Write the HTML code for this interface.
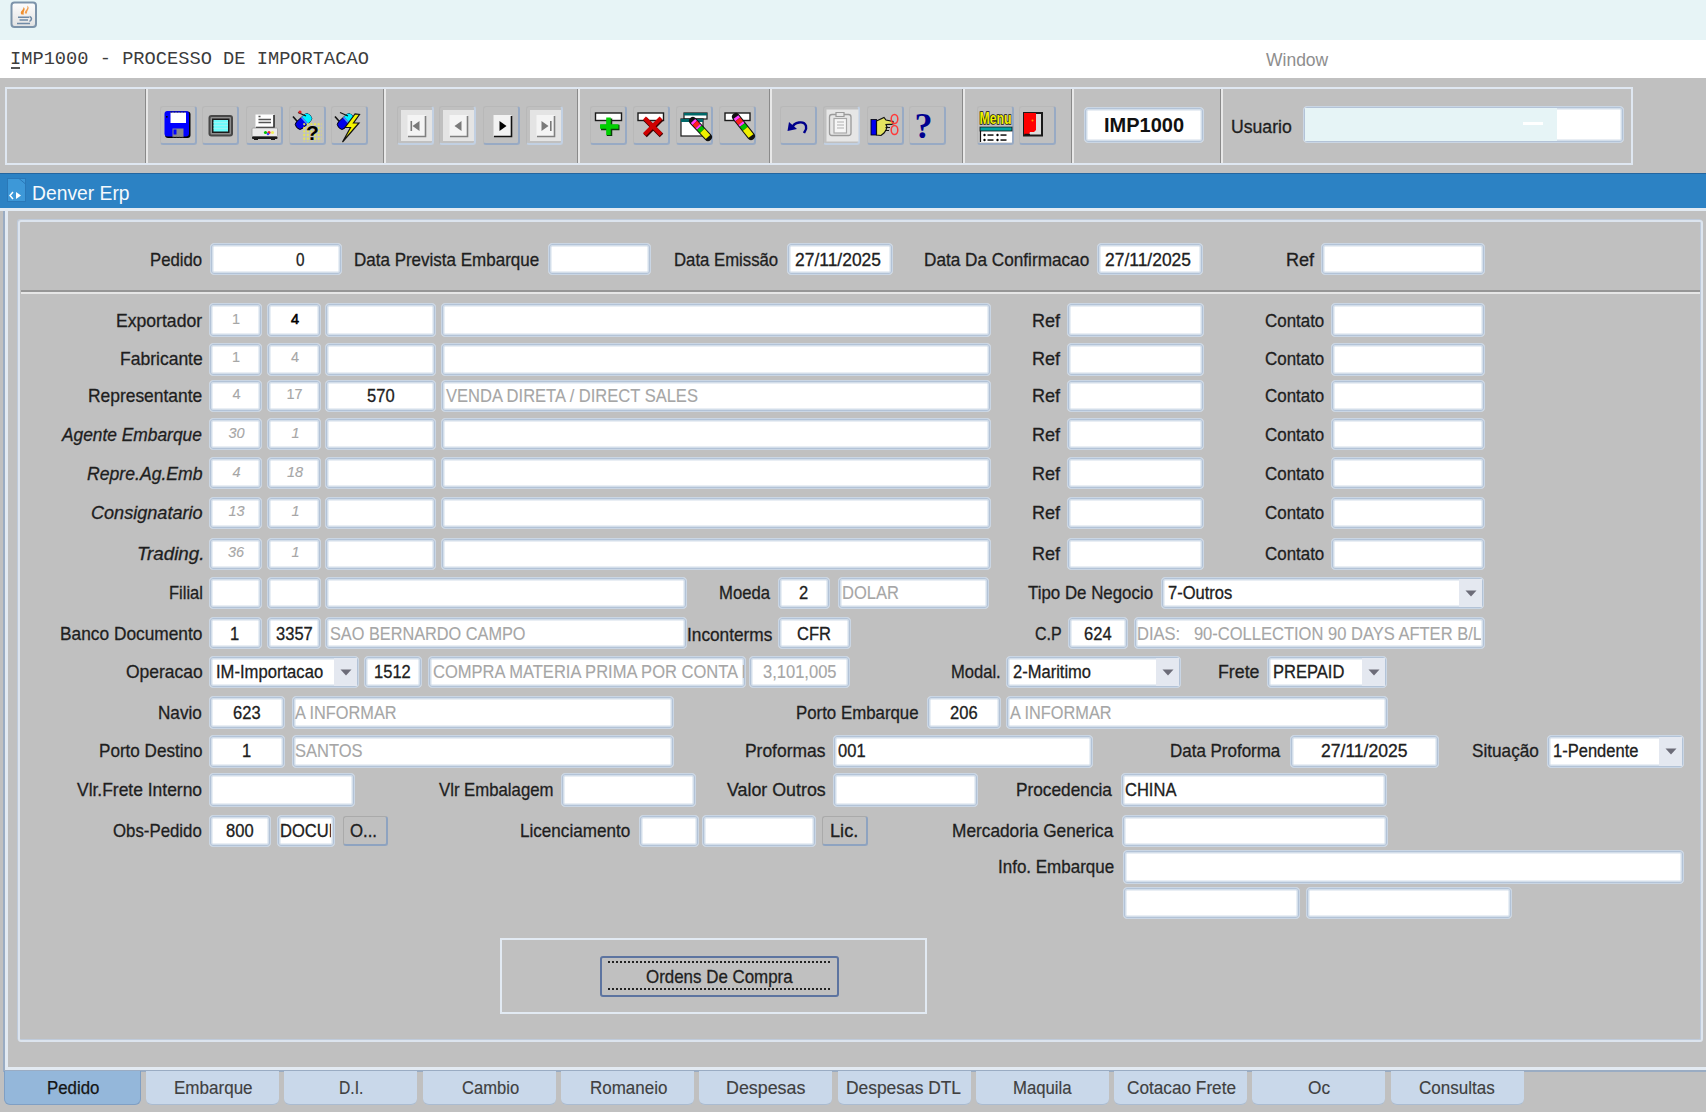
<!DOCTYPE html><html><head><meta charset="utf-8"><title>IMP1000</title><style>
*{margin:0;padding:0;box-sizing:border-box}
html,body{width:1706px;height:1112px;overflow:hidden;background:#c0c0c0;font-family:"Liberation Sans",sans-serif;font-size:17px;color:#1a1a1a}
div,span{position:absolute;white-space:nowrap}
svg{position:absolute}
.f{background:#fff;border:1px solid #cad6e4;box-shadow:inset 0 0 0 1px #b3c3d7,inset 0 0 0 2.5px #d3deea;border-radius:4px}
.arr{background:#e4e8f0}
.t{line-height:20px;transform-origin:0 0}
.tb{border-radius:3px;border-right:2px solid #98aac4;border-bottom:2px solid #98aac4;border-left:1px solid #b8b8b8;border-top:1px solid #b8b8b8}
.btn{border-radius:3px;border-right:2px solid #8ea3c0;border-bottom:2px solid #8ea3c0;border-left:1px solid #aaaaaa;border-top:1px solid #aaaaaa}
.sep{width:3px;border-left:1px solid #8a8a8a;border-right:2px solid #e8e8e8;top:89px;height:74px}
.tab{top:1071px;height:34px;background:#c9d8ea;border-radius:0 0 6px 6px;border-bottom:1px solid #aabbd0}
</style></head><body>
<div style="left:0;top:0;width:1706px;height:40px;background:#e7f4f6"></div>
<svg style="left:10px;top:1px" width="28" height="28"><defs><linearGradient id="jg" x1="0" y1="0" x2="0" y2="1"><stop offset="0" stop-color="#fdfdfd"/><stop offset="1" stop-color="#e2e2e2"/></linearGradient></defs><rect x="1.5" y="1.5" width="24.5" height="24.5" rx="3" fill="url(#jg)" stroke="#7c93aa" stroke-width="2"/><path d="M11.5 13.5 C9 10.5 14 9 13.5 6 C16.5 8.5 12.5 10.5 14 13.5 Z" fill="#ef8f2f"/><path d="M15 12.5 C14 9.5 19 8 17 4.5 C21 7 16.5 9.5 17 12.5 Z" fill="#f2a050"/><path d="M8 16.2 H19 M9.5 19 H18 M7 22.5 H20" stroke="#6f8aa6" stroke-width="1.6"/><path d="M19.5 15.5 Q23.5 17.5 19.5 20.5" stroke="#6f8aa6" stroke-width="1.5" fill="none"/></svg>
<div style="left:0;top:40px;width:1706px;height:38px;background:#fff"></div>
<div style="left:10px;top:45px;font-family:'Liberation Mono',monospace;font-size:18.7px;line-height:28px;color:#3c3c3c">IMP1000 - PROCESSO DE IMPORTACAO</div>
<div style="left:11px;top:67px;width:9px;height:2px;background:#555"></div>
<div style="left:1266px;top:46px;font-size:17.5px;line-height:28px;color:#8e8e8e">Window</div>
<div style="left:5px;top:87px;width:1628px;height:78px;border:2px solid #dfe7f1"></div>
<div class="sep" style="left:145px"></div>
<div class="sep" style="left:383px"></div>
<div class="sep" style="left:577px"></div>
<div class="sep" style="left:769px"></div>
<div class="sep" style="left:962px"></div>
<div class="sep" style="left:1071px"></div>
<div class="sep" style="left:1220px"></div>
<div class="tb" style="left:160px;top:106px;width:37px;height:39px;"></div>
<div class="tb" style="left:202px;top:106px;width:37px;height:39px;"></div>
<div class="tb" style="left:246px;top:106px;width:37px;height:39px;"></div>
<div class="tb" style="left:289px;top:106px;width:37px;height:39px;"></div>
<div class="tb" style="left:331px;top:106px;width:37px;height:39px;"></div>
<div class="tb" style="left:397px;top:106px;width:37px;height:39px;border-right-color:#c2d0e2;border-bottom-color:#c2d0e2;"></div>
<div class="tb" style="left:439px;top:106px;width:37px;height:39px;border-right-color:#c2d0e2;border-bottom-color:#c2d0e2;"></div>
<div class="tb" style="left:483px;top:106px;width:37px;height:39px;"></div>
<div class="tb" style="left:526px;top:106px;width:37px;height:39px;border-right-color:#c2d0e2;border-bottom-color:#c2d0e2;"></div>
<div class="tb" style="left:590px;top:106px;width:37px;height:39px;"></div>
<div class="tb" style="left:633px;top:106px;width:37px;height:39px;"></div>
<div class="tb" style="left:676px;top:106px;width:37px;height:39px;"></div>
<div class="tb" style="left:719px;top:106px;width:37px;height:39px;"></div>
<div class="tb" style="left:780px;top:106px;width:37px;height:39px;"></div>
<div class="tb" style="left:823px;top:106px;width:37px;height:39px;border-right-color:#c2d0e2;border-bottom-color:#c2d0e2;"></div>
<div class="tb" style="left:867px;top:106px;width:37px;height:39px;"></div>
<div class="tb" style="left:909px;top:106px;width:37px;height:39px;"></div>
<div class="tb" style="left:977px;top:106px;width:37px;height:39px;"></div>
<div class="tb" style="left:1019px;top:106px;width:37px;height:39px;"></div>
<svg width="1706" height="180" style="position:absolute;left:0;top:0"><defs><pattern id="ydots" width="3.6" height="3.6" patternUnits="userSpaceOnUse"><circle cx="1.8" cy="1.8" r="1.1" fill="#e8e850"/></pattern></defs><rect x="165" y="111.5" width="25.5" height="26.5" rx="3" fill="#000"/><rect x="164.5" y="111" width="24.5" height="25.5" rx="3" fill="#0000ff"/><rect x="170.5" y="112.5" width="15.5" height="10.5" fill="#fff"/><line x1="170.5" y1="112" x2="186" y2="112" stroke="#222" stroke-width="1" stroke-dasharray="2,1"/><rect x="172.5" y="128.5" width="11" height="8.5" fill="#8a8a8a"/><rect x="173.5" y="129.5" width="3" height="5" fill="#0000ff"/><line x1="172.5" y1="137.3" x2="183.5" y2="137.3" stroke="#222" stroke-width="1" stroke-dasharray="2,1"/><rect x="166" y="116" width="1.6" height="1.6" fill="#000"/><rect x="208.5" y="115" width="24.5" height="21.5" rx="3" fill="#474747"/><rect x="210.5" y="117" width="20.5" height="17.5" rx="1" fill="#8c8c8c"/><rect x="212" y="118.5" width="17.5" height="14.5" fill="#1a1a1a"/><rect x="213.5" y="120" width="14.5" height="11.5" fill="#6ffcfc"/><line x1="213.5" y1="122.5" x2="228" y2="122.5" stroke="#b8f0f0" stroke-width="0.6"/><line x1="213.5" y1="125.5" x2="228" y2="125.5" stroke="#b8f0f0" stroke-width="0.6"/><line x1="213.5" y1="128.5" x2="228" y2="128.5" stroke="#b8f0f0" stroke-width="0.6"/><rect x="255.5" y="114.5" width="18.5" height="12.5" fill="#fff"/><path d="M274 115 V127.5 H256" stroke="#222" stroke-width="1.5" fill="none"/><path d="M258.5 116.5 h2 M258.5 119.5 h12.5 M258.5 122.5 h12.5" stroke="#555" stroke-width="1.3"/><rect x="252" y="128" width="25.5" height="8.5" rx="1" fill="#ececec" stroke="#9a9a9a" stroke-width="0.8"/><circle cx="265.5" cy="132.5" r="1.6" fill="#00c000"/><circle cx="269" cy="132.5" r="1.6" fill="#ff2020"/><circle cx="268" cy="134" r="1.3" fill="#4040ff"/><circle cx="272.5" cy="132.5" r="1.6" fill="#f0f060"/><rect x="252" y="136.5" width="25.5" height="2.5" rx="1" fill="#1a1a1a"/><rect x="254" y="138.5" width="4" height="1.5" fill="#1a1a1a"/><rect x="271" y="138.5" width="4" height="1.5" fill="#1a1a1a"/><path d="M293 116.5 L299.5 124" stroke="#111" stroke-width="1.6"/><g transform="translate(303.5 121.5) rotate(-42)"><rect x="-9" y="-4.5" width="18" height="9" rx="4" fill="#0000e8" stroke="#000" stroke-width="0.9"/><path d="M2 -4.5 H5 A4 4 0 0 1 9 -0.5 V0.5 A4 4 0 0 1 5 4.5 H2 Z" fill="#00f0ff"/><rect x="0.5" y="-4.5" width="1.6" height="9" fill="#5090ff"/></g><path d="M298 112.5 L306 116" stroke="#111" stroke-width="1.2"/><circle cx="300" cy="112" r="1.6" fill="#e02020"/><rect x="303" y="123" width="18.5" height="18.5" fill="url(#ydots)"/><text x="306" y="140" font-family="Liberation Sans" font-weight="bold" font-size="21" fill="#000">?</text><path d="M335 116.5 L341.5 124" stroke="#111" stroke-width="1.6"/><g transform="translate(345.5 121.5) rotate(-42)"><rect x="-9" y="-4.5" width="18" height="9" rx="4" fill="#0000e8" stroke="#000" stroke-width="0.9"/><path d="M2 -4.5 H5 A4 4 0 0 1 9 -0.5 V0.5 A4 4 0 0 1 5 4.5 H2 Z" fill="#00f0ff"/><rect x="0.5" y="-4.5" width="1.6" height="9" fill="#5090ff"/></g><path d="M340 112.5 L348 116" stroke="#111" stroke-width="1.2"/><path d="M355 114 L345 127.5 L350.5 127.5 L342.5 142 L359 123 L353.5 123 L359.5 114.5 Z" fill="#f4f400" stroke="#111" stroke-width="1.2"/><rect x="401" y="110" width="31" height="31" fill="#e4e4e4"/><rect x="407.5" y="115" width="18" height="21" fill="#f4f4f4"/><path d="M425.5 116 V136.5 H408" stroke="#808080" stroke-width="1.6" fill="none"/><rect x="410.5" y="121" width="1.6" height="10" fill="#7a7a7a"/><path d="M412.5 126 L419.5 121 V131 Z" fill="#7a7a7a"/><rect x="443" y="110" width="31" height="31" fill="#e4e4e4"/><rect x="449.5" y="115" width="18" height="21" fill="#f4f4f4"/><path d="M467.5 116 V136.5 H450" stroke="#808080" stroke-width="1.6" fill="none"/><path d="M454.5 126 L461.5 121 V131 Z" fill="#7a7a7a"/><rect x="493.5" y="115" width="18" height="21" fill="#f2f2f2"/><path d="M511.5 116 V136.5 H494" stroke="#111" stroke-width="1.6" fill="none"/><path d="M506.5 126 L499.5 121 V131 Z" fill="#000"/><rect x="530" y="110" width="31" height="31" fill="#e4e4e4"/><rect x="536.5" y="115" width="18" height="21" fill="#f4f4f4"/><path d="M554.5 116 V136.5 H537" stroke="#808080" stroke-width="1.6" fill="none"/><path d="M548.5 126 L541.5 121 V131 Z" fill="#7a7a7a"/><rect x="550.0" y="121" width="1.6" height="10" fill="#7a7a7a"/><rect x="595.5" y="113" width="26" height="7.5" fill="#fff" stroke="#1a1a1a" stroke-width="1.4"/><path d="M609.5 118.5 V136 M601 127.5 H619.5" stroke="#0a3a0a" stroke-width="5.5"/><path d="M608.5 117.5 V135 M600 126.5 H618.5" stroke="#00d000" stroke-width="4.5"/><rect x="638" y="113" width="25.5" height="7.5" fill="#fff" stroke="#1a1a1a" stroke-width="1.4"/><path d="M645 119 L661.5 135.5 M661.5 119 L645 135.5" stroke="#3a0000" stroke-width="5"/><path d="M644.5 118 L661 134.5 M661 118 L644.5 134.5" stroke="#d00000" stroke-width="4"/><rect x="684" y="113" width="23" height="6" fill="#fff" stroke="#1a1a1a" stroke-width="1.2"/><rect x="684" y="113" width="23" height="2.5" fill="#006868"/><rect x="681" y="119" width="22" height="17" fill="#fff" stroke="#1a1a1a" stroke-width="1.2"/><rect x="681" y="119" width="22" height="3" fill="#006868"/><path d="M693 121 L708 137" stroke="#111" stroke-width="8" stroke-linecap="round"/><path d="M693.0 121.0 L694.8 122.9" stroke="#ff40ff" stroke-width="6"/><path d="M694.8 122.9 L697.8 126.1" stroke="#ff2020" stroke-width="6"/><path d="M697.8 126.1 L699.3 127.7" stroke="#ff40ff" stroke-width="6"/><path d="M699.3 127.7 L702.3 130.9" stroke="#00c000" stroke-width="6"/><path d="M702.3 130.9 L708.0 137.0" stroke="#f0f000" stroke-width="6"/><rect x="725" y="113" width="25" height="7.5" fill="#fff" stroke="#1a1a1a" stroke-width="1.4"/><path d="M736 117 L751 136" stroke="#111" stroke-width="8" stroke-linecap="round"/><path d="M736.0 117.0 L737.8 119.3" stroke="#ff40ff" stroke-width="6"/><path d="M737.8 119.3 L740.8 123.1" stroke="#ff2020" stroke-width="6"/><path d="M740.8 123.1 L742.3 125.0" stroke="#ff40ff" stroke-width="6"/><path d="M742.3 125.0 L745.3 128.8" stroke="#00c000" stroke-width="6"/><path d="M745.3 128.8 L751.0 136.0" stroke="#f0f000" stroke-width="6"/><path d="M792 128 C794 122 804 120 806 126 C807 129 805 131 804 133" stroke="#00008b" stroke-width="2.4" fill="none"/><path d="M787.5 131 L789 122 L797 129 Z" fill="#00008b"/><rect x="826.5" y="109.5" width="32" height="32" fill="#e6e6e6"/><rect x="829.5" y="114.5" width="21.5" height="21" rx="2.5" fill="none" stroke="#9a9a9a" stroke-width="1.3"/><rect x="834" y="118.5" width="12.5" height="14.5" fill="#f6f6f6" stroke="#a8a8a8" stroke-width="1.2"/><path d="M836 112.5 h8 v4 h-8 z" fill="#e6e6e6" stroke="#9a9a9a" stroke-width="1.2"/><path d="M837 122 h7 M837 125 h7 M837 128 h7" stroke="#b0b0b0" stroke-width="1"/><rect x="871" y="119.5" width="5.5" height="15.5" fill="#0000f0" stroke="#000" stroke-width="0.8"/><path d="M876.5 121 L884 117.5 L886 120 L893 121.5 L893 124 L886 124.5 L887 127 L886 130 L884 133 L881 135.5 L876.5 135 Z" fill="#e4e460" stroke="#111" stroke-width="1.2"/><path d="M886 124.5 H892 M885.5 127.5 H890 M885 130.5 H889" stroke="#111" stroke-width="1"/><ellipse cx="894.5" cy="119" rx="3.3" ry="4.5" fill="none" stroke="#ff3a3a" stroke-width="1.5"/><ellipse cx="894.5" cy="130" rx="3.3" ry="4.5" fill="none" stroke="#ff3a3a" stroke-width="1.5"/><text x="914.5" y="138" font-family="Liberation Serif" font-weight="bold" font-size="36" fill="#000090">?</text><rect x="980" y="126.5" width="32" height="16" fill="#fff"/><rect x="980" y="127" width="32" height="4" fill="#00a0a0" stroke="#111" stroke-width="0.8"/><path d="M980.5 131 V142" stroke="#111" stroke-width="1.2"/><circle cx="984.5" cy="135" r="1.2" fill="#000"/><rect x="987.5" y="134.3" width="6" height="1.5" fill="#111"/><circle cx="997.5" cy="135" r="1.2" fill="#000"/><rect x="1000.5" y="134.3" width="6" height="1.5" fill="#111"/><circle cx="984.5" cy="140" r="1.2" fill="#000"/><rect x="987.5" y="139.3" width="6" height="1.5" fill="#111"/><circle cx="997.5" cy="140" r="1.2" fill="#000"/><rect x="1000.5" y="139.3" width="6" height="1.5" fill="#111"/><text x="979.5" y="124" font-family="Liberation Sans" font-weight="bold" font-size="17" fill="#f0f000" stroke="#111" stroke-width="1.6" paint-order="stroke" textLength="32" lengthAdjust="spacingAndGlyphs">Menu</text><rect x="1024" y="113" width="18" height="22.5" fill="#dcdcdc" stroke="#1a1a1a" stroke-width="2"/><path d="M1024 113 H1036 V130 L1034 132 L1030 132 L1029 134.5 L1024 134.5 Z" fill="#ff0000"/><path d="M1024.5 134.5 H1030" stroke="#111" stroke-width="1.5"/><circle cx="1032.5" cy="120.5" r="1" fill="#ff9900"/></svg>
<div class="f" style="left:1084px;top:107px;width:120px;height:36px;line-height:34px;text-align:center;font-weight:bold;font-size:20px;color:#111">IMP1000</div>
<span class="t" style="left:1230.99px;top:116.80px;font-size:17.5px;color:#1e1e1e;-webkit-text-stroke:0.3px #1e1e1e;transform:scaleX(1.0074);">Usuario</span>
<div class="f" style="left:1303px;top:106px;width:321px;height:37px"><div style="left:1px;top:1px;width:252px;height:33px;background:#e6f4f6"></div><div style="left:219px;top:15px;width:20px;height:3px;background:#fff"></div></div>
<div style="left:0;top:173px;width:1706px;height:35px;background:#2c82c4;border-top:1px solid #2466a0"></div>
<svg style="left:7px;top:178px" width="20" height="25"><rect x="0.5" y="0.5" width="18" height="23" fill="#3d98d8" stroke="#2a78b8"/><path d="M12 0.5 L18.5 6" stroke="#2a78b8"/><path d="M9 14 L14 17.5 L9 21 Z" fill="#fff"/><path d="M6 14 L3 17.5 L6 21" stroke="#fff" stroke-width="1.5" fill="none"/></svg>
<span class="t" style="left:32.04px;top:182.80px;font-size:20px;color:#f4f9fc;transform:scaleX(0.9647);">Denver Erp</span>
<div style="left:0;top:208px;width:1706px;height:3px;background:#e3ebf3"></div>
<div style="left:3px;top:211px;width:2px;height:860px;background:#9aacc3"></div>
<div style="left:5px;top:209px;width:3px;height:860px;background:#e3eaf2"></div>
<div style="left:5px;top:1067px;width:1701px;height:3px;background:#e3eaf2"></div>
<div style="left:3px;top:1070px;width:1703px;height:2px;background:#9aacc3"></div>
<div style="left:18px;top:220px;width:1685px;height:822px;border:2px solid #dce4ee;border-radius:3px;box-shadow:-1px -1px 0 #bfcbdb, inset -1px -1px 0 #bfcbdb"></div>
<div style="left:21px;top:290px;width:1679px;height:2px;background:#969696"></div>
<div style="left:21px;top:292px;width:1679px;height:2px;background:#e6e6e6"></div>
<span class="t" style="left:150.09px;top:249.80px;font-size:18.5px;color:#1e1e1e;-webkit-text-stroke:0.3px #1e1e1e;transform:scaleX(0.9056);">Pedido</span>
<div class="f" style="left:210px;top:243px;width:132px;height:32px"></div>
<span class="t" style="left:296.00px;top:249.80px;font-size:18px;color:#202020;-webkit-text-stroke:0.3px #202020;transform:scaleX(0.8500);">0</span>
<span class="t" style="left:354.08px;top:249.80px;font-size:18.5px;color:#1e1e1e;-webkit-text-stroke:0.3px #1e1e1e;transform:scaleX(0.9188);">Data Prevista Embarque</span>
<div class="f" style="left:548px;top:243px;width:103px;height:32px"></div>
<span class="t" style="left:674.10px;top:249.80px;font-size:18.5px;color:#1e1e1e;-webkit-text-stroke:0.3px #1e1e1e;transform:scaleX(0.9046);">Data Emissão</span>
<div class="f" style="left:787px;top:243px;width:106px;height:32px"></div>
<span class="t" style="left:795.40px;top:249.80px;font-size:18px;color:#202020;-webkit-text-stroke:0.3px #202020;transform:scaleX(0.9691);">27/11/2025</span>
<span class="t" style="left:924.07px;top:249.80px;font-size:18.5px;color:#1e1e1e;-webkit-text-stroke:0.3px #1e1e1e;transform:scaleX(0.9287);">Data Da Confirmacao</span>
<div class="f" style="left:1097px;top:243px;width:106px;height:32px"></div>
<span class="t" style="left:1105.40px;top:249.80px;font-size:18px;color:#202020;-webkit-text-stroke:0.3px #202020;transform:scaleX(0.9691);">27/11/2025</span>
<span class="t" style="left:1286.02px;top:249.80px;font-size:18.5px;color:#1e1e1e;-webkit-text-stroke:0.3px #1e1e1e;transform:scaleX(0.9773);">Ref</span>
<div class="f" style="left:1321px;top:243px;width:164px;height:32px"></div>
<span class="t" style="left:116.05px;top:310.80px;font-size:18.5px;color:#1e1e1e;-webkit-text-stroke:0.3px #1e1e1e;transform:scaleX(0.9515);">Exportador</span>
<div class="f" style="left:209px;top:303px;width:53px;height:34px"></div>
<div class="f" style="left:267px;top:303px;width:54px;height:34px"></div>
<div class="f" style="left:325px;top:303px;width:111px;height:34px"></div>
<div class="f" style="left:441px;top:303px;width:550px;height:34px"></div>
<span class="t" style="left:232.00px;top:309.30px;font-size:14.5px;color:#a6a6a6;-webkit-text-stroke:0.1px #a6a6a6;">1</span>
<span class="t" style="left:291.00px;top:309.30px;font-size:14.5px;color:#000;-webkit-text-stroke:0.6px #000;">4</span>
<span class="t" style="left:1032.02px;top:310.80px;font-size:18.5px;color:#1e1e1e;-webkit-text-stroke:0.3px #1e1e1e;transform:scaleX(0.9773);">Ref</span>
<div class="f" style="left:1067px;top:303px;width:137px;height:34px"></div>
<span class="t" style="left:1265.00px;top:310.80px;font-size:18.5px;color:#1e1e1e;-webkit-text-stroke:0.3px #1e1e1e;transform:scaleX(0.9146);">Contato</span>
<div class="f" style="left:1331px;top:303px;width:154px;height:34px"></div>
<span class="t" style="left:119.55px;top:348.80px;font-size:18.5px;color:#1e1e1e;-webkit-text-stroke:0.3px #1e1e1e;transform:scaleX(0.9464);">Fabricante</span>
<div class="f" style="left:209px;top:343px;width:53px;height:33px"></div>
<div class="f" style="left:267px;top:343px;width:54px;height:33px"></div>
<div class="f" style="left:325px;top:343px;width:111px;height:33px"></div>
<div class="f" style="left:441px;top:343px;width:550px;height:33px"></div>
<span class="t" style="left:232.00px;top:347.30px;font-size:14.5px;color:#a6a6a6;-webkit-text-stroke:0.1px #a6a6a6;">1</span>
<span class="t" style="left:291.00px;top:347.30px;font-size:14.5px;color:#a6a6a6;-webkit-text-stroke:0.1px #a6a6a6;">4</span>
<span class="t" style="left:1032.02px;top:348.80px;font-size:18.5px;color:#1e1e1e;-webkit-text-stroke:0.3px #1e1e1e;transform:scaleX(0.9773);">Ref</span>
<div class="f" style="left:1067px;top:343px;width:137px;height:33px"></div>
<span class="t" style="left:1265.00px;top:348.80px;font-size:18.5px;color:#1e1e1e;-webkit-text-stroke:0.3px #1e1e1e;transform:scaleX(0.9146);">Contato</span>
<div class="f" style="left:1331px;top:343px;width:154px;height:33px"></div>
<span class="t" style="left:88.06px;top:385.80px;font-size:18.5px;color:#1e1e1e;-webkit-text-stroke:0.3px #1e1e1e;transform:scaleX(0.9411);">Representante</span>
<div class="f" style="left:209px;top:380px;width:53px;height:32px"></div>
<div class="f" style="left:267px;top:380px;width:54px;height:32px"></div>
<div class="f" style="left:325px;top:380px;width:111px;height:32px"></div>
<div class="f" style="left:441px;top:380px;width:550px;height:32px"></div>
<span class="t" style="left:232.50px;top:384.30px;font-size:14.5px;color:#a6a6a6;-webkit-text-stroke:0.1px #a6a6a6;">4</span>
<span class="t" style="left:286.47px;top:384.30px;font-size:14.5px;color:#a6a6a6;-webkit-text-stroke:0.1px #a6a6a6;">17</span>
<span class="t" style="left:366.72px;top:385.80px;font-size:18px;color:#202020;-webkit-text-stroke:0.3px #202020;transform:scaleX(0.9180);">570</span>
<span class="t" style="left:446.00px;top:385.80px;font-size:18px;color:#a6a6a6;-webkit-text-stroke:0.12px #a6a6a6;transform:scaleX(0.9180);">VENDA DIRETA / DIRECT SALES</span>
<span class="t" style="left:1032.02px;top:385.80px;font-size:18.5px;color:#1e1e1e;-webkit-text-stroke:0.3px #1e1e1e;transform:scaleX(0.9773);">Ref</span>
<div class="f" style="left:1067px;top:380px;width:137px;height:32px"></div>
<span class="t" style="left:1265.00px;top:385.80px;font-size:18.5px;color:#1e1e1e;-webkit-text-stroke:0.3px #1e1e1e;transform:scaleX(0.9146);">Contato</span>
<div class="f" style="left:1331px;top:380px;width:154px;height:32px"></div>
<span class="t" style="left:62.44px;top:424.80px;font-size:18.5px;color:#1e1e1e;font-style:italic;-webkit-text-stroke:0.3px #1e1e1e;transform:scaleX(0.9377);">Agente Embarque</span>
<div class="f" style="left:209px;top:418px;width:53px;height:32px"></div>
<div class="f" style="left:267px;top:418px;width:54px;height:32px"></div>
<div class="f" style="left:325px;top:418px;width:111px;height:32px"></div>
<div class="f" style="left:441px;top:418px;width:550px;height:32px"></div>
<span class="t" style="left:228.47px;top:423.30px;font-size:14.5px;color:#a6a6a6;font-style:italic;-webkit-text-stroke:0.1px #a6a6a6;">30</span>
<span class="t" style="left:291.50px;top:423.30px;font-size:14.5px;color:#a6a6a6;font-style:italic;-webkit-text-stroke:0.1px #a6a6a6;">1</span>
<span class="t" style="left:1032.02px;top:424.80px;font-size:18.5px;color:#1e1e1e;-webkit-text-stroke:0.3px #1e1e1e;transform:scaleX(0.9773);">Ref</span>
<div class="f" style="left:1067px;top:418px;width:137px;height:32px"></div>
<span class="t" style="left:1265.00px;top:424.80px;font-size:18.5px;color:#1e1e1e;-webkit-text-stroke:0.3px #1e1e1e;transform:scaleX(0.9146);">Contato</span>
<div class="f" style="left:1331px;top:418px;width:154px;height:32px"></div>
<span class="t" style="left:86.70px;top:463.50px;font-size:18.5px;color:#1e1e1e;font-style:italic;-webkit-text-stroke:0.3px #1e1e1e;transform:scaleX(0.9525);">Repre.Ag.Emb</span>
<div class="f" style="left:209px;top:457px;width:53px;height:32px"></div>
<div class="f" style="left:267px;top:457px;width:54px;height:32px"></div>
<div class="f" style="left:325px;top:457px;width:111px;height:32px"></div>
<div class="f" style="left:441px;top:457px;width:550px;height:32px"></div>
<span class="t" style="left:232.50px;top:462.00px;font-size:14.5px;color:#a6a6a6;font-style:italic;-webkit-text-stroke:0.1px #a6a6a6;">4</span>
<span class="t" style="left:286.97px;top:462.00px;font-size:14.5px;color:#a6a6a6;font-style:italic;-webkit-text-stroke:0.1px #a6a6a6;">18</span>
<span class="t" style="left:1032.02px;top:463.50px;font-size:18.5px;color:#1e1e1e;-webkit-text-stroke:0.3px #1e1e1e;transform:scaleX(0.9773);">Ref</span>
<div class="f" style="left:1067px;top:457px;width:137px;height:32px"></div>
<span class="t" style="left:1265.00px;top:463.50px;font-size:18.5px;color:#1e1e1e;-webkit-text-stroke:0.3px #1e1e1e;transform:scaleX(0.9146);">Contato</span>
<div class="f" style="left:1331px;top:457px;width:154px;height:32px"></div>
<span class="t" style="left:90.72px;top:502.80px;font-size:18.5px;color:#1e1e1e;font-style:italic;-webkit-text-stroke:0.3px #1e1e1e;transform:scaleX(0.9773);">Consignatario</span>
<div class="f" style="left:209px;top:497px;width:53px;height:32px"></div>
<div class="f" style="left:267px;top:497px;width:54px;height:32px"></div>
<div class="f" style="left:325px;top:497px;width:111px;height:32px"></div>
<div class="f" style="left:441px;top:497px;width:550px;height:32px"></div>
<span class="t" style="left:228.47px;top:501.30px;font-size:14.5px;color:#a6a6a6;font-style:italic;-webkit-text-stroke:0.1px #a6a6a6;">13</span>
<span class="t" style="left:291.50px;top:501.30px;font-size:14.5px;color:#a6a6a6;font-style:italic;-webkit-text-stroke:0.1px #a6a6a6;">1</span>
<span class="t" style="left:1032.02px;top:502.80px;font-size:18.5px;color:#1e1e1e;-webkit-text-stroke:0.3px #1e1e1e;transform:scaleX(0.9773);">Ref</span>
<div class="f" style="left:1067px;top:497px;width:137px;height:32px"></div>
<span class="t" style="left:1265.00px;top:502.80px;font-size:18.5px;color:#1e1e1e;-webkit-text-stroke:0.3px #1e1e1e;transform:scaleX(0.9146);">Contato</span>
<div class="f" style="left:1331px;top:497px;width:154px;height:32px"></div>
<span class="t" style="left:136.79px;top:543.50px;font-size:18.5px;color:#1e1e1e;font-style:italic;-webkit-text-stroke:0.3px #1e1e1e;transform:scaleX(1.0134);">Trading.</span>
<div class="f" style="left:209px;top:538px;width:53px;height:32px"></div>
<div class="f" style="left:267px;top:538px;width:54px;height:32px"></div>
<div class="f" style="left:325px;top:538px;width:111px;height:32px"></div>
<div class="f" style="left:441px;top:538px;width:550px;height:32px"></div>
<span class="t" style="left:227.97px;top:542.00px;font-size:14.5px;color:#a6a6a6;font-style:italic;-webkit-text-stroke:0.1px #a6a6a6;">36</span>
<span class="t" style="left:291.50px;top:542.00px;font-size:14.5px;color:#a6a6a6;font-style:italic;-webkit-text-stroke:0.1px #a6a6a6;">1</span>
<span class="t" style="left:1032.02px;top:543.50px;font-size:18.5px;color:#1e1e1e;-webkit-text-stroke:0.3px #1e1e1e;transform:scaleX(0.9773);">Ref</span>
<div class="f" style="left:1067px;top:538px;width:137px;height:32px"></div>
<span class="t" style="left:1265.00px;top:543.50px;font-size:18.5px;color:#1e1e1e;-webkit-text-stroke:0.3px #1e1e1e;transform:scaleX(0.9146);">Contato</span>
<div class="f" style="left:1331px;top:538px;width:154px;height:32px"></div>
<span class="t" style="left:169.11px;top:583.40px;font-size:18.5px;color:#1e1e1e;-webkit-text-stroke:0.3px #1e1e1e;transform:scaleX(0.8909);">Filial</span>
<div class="f" style="left:209px;top:577px;width:53px;height:32px"></div>
<div class="f" style="left:267px;top:577px;width:54px;height:32px"></div>
<div class="f" style="left:325px;top:577px;width:362px;height:32px"></div>
<span class="t" style="left:719.10px;top:583.40px;font-size:18.5px;color:#1e1e1e;-webkit-text-stroke:0.3px #1e1e1e;transform:scaleX(0.9009);">Moeda</span>
<div class="f" style="left:778px;top:577px;width:52px;height:32px"></div>
<span class="t" style="left:799.41px;top:583.40px;font-size:18px;color:#202020;-webkit-text-stroke:0.3px #202020;transform:scaleX(0.9180);">2</span>
<div class="f" style="left:838px;top:577px;width:150.5px;height:32px"></div>
<span class="t" style="left:842.08px;top:583.40px;font-size:18px;color:#a6a6a6;-webkit-text-stroke:0.12px #a6a6a6;transform:scaleX(0.9180);">DOLAR</span>
<span class="t" style="left:1028.00px;top:583.40px;font-size:18.5px;color:#1e1e1e;-webkit-text-stroke:0.3px #1e1e1e;transform:scaleX(0.9122);">Tipo De Negocio</span>
<div class="f" style="left:1161px;top:577px;width:323px;height:32px"></div>
<div class="arr" style="left:1459px;top:579px;width:23px;height:28px"></div>
<svg style="position:absolute;left:1464.5px;top:589.5px" width="12" height="7"><path d="M0.5 0.5 H11.5 L6 6.5 Z" fill="#6c6c78"/></svg>
<span class="t" style="left:1168.40px;top:583.40px;font-size:18px;color:#202020;-webkit-text-stroke:0.3px #202020;transform:scaleX(0.9180);">7-Outros</span>
<span class="t" style="left:59.86px;top:624.30px;font-size:18.5px;color:#1e1e1e;-webkit-text-stroke:0.3px #1e1e1e;transform:scaleX(0.9356);">Banco Documento</span>
<div class="f" style="left:209px;top:617px;width:53px;height:32px"></div>
<div class="f" style="left:267px;top:617px;width:54px;height:32px"></div>
<div class="f" style="left:325px;top:617px;width:362px;height:32px"></div>
<span class="t" style="left:230.45px;top:624.30px;font-size:18px;color:#202020;-webkit-text-stroke:0.3px #202020;transform:scaleX(0.9180);">1</span>
<span class="t" style="left:275.63px;top:624.30px;font-size:18px;color:#202020;-webkit-text-stroke:0.3px #202020;transform:scaleX(0.9180);">3357</span>
<span class="t" style="left:329.50px;top:624.30px;font-size:18px;color:#a6a6a6;-webkit-text-stroke:0.12px #a6a6a6;transform:scaleX(0.9049);">SAO BERNARDO CAMPO</span>
<span class="t" style="left:687.07px;top:624.80px;font-size:18.5px;color:#1e1e1e;-webkit-text-stroke:0.3px #1e1e1e;transform:scaleX(0.9329);">Inconterms</span>
<div class="f" style="left:778px;top:617px;width:72.5px;height:32px"></div>
<span class="t" style="left:797.27px;top:624.30px;font-size:18px;color:#202020;-webkit-text-stroke:0.3px #202020;transform:scaleX(0.9180);">CFR</span>
<span class="t" style="left:1034.60px;top:624.30px;font-size:18.5px;color:#1e1e1e;-webkit-text-stroke:0.3px #1e1e1e;transform:scaleX(0.8656);">C.P</span>
<div class="f" style="left:1068px;top:617px;width:59.5px;height:32px"></div>
<span class="t" style="left:1083.97px;top:624.30px;font-size:18px;color:#202020;-webkit-text-stroke:0.3px #202020;transform:scaleX(0.9180);">624</span>
<div class="f" style="left:1133.5px;top:617px;width:351.5px;height:32px"></div>
<div style="left:0;top:0;width:1481px;height:1112px;overflow:hidden"><span class="t" style="left:1137.08px;top:624.30px;font-size:18px;color:#a6a6a6;-webkit-text-stroke:0.12px #a6a6a6;transform:scaleX(0.9180);">DIAS:&nbsp;&nbsp;&nbsp;90-COLLECTION 90 DAYS AFTER B/L</span></div>
<span class="t" style="left:125.50px;top:662.30px;font-size:18.5px;color:#1e1e1e;-webkit-text-stroke:0.3px #1e1e1e;transform:scaleX(0.9450);">Operacao</span>
<div class="f" style="left:209px;top:656px;width:150px;height:32px"></div>
<div class="arr" style="left:334px;top:658px;width:23px;height:28px"></div>
<svg style="position:absolute;left:339.5px;top:668.5px" width="12" height="7"><path d="M0.5 0.5 H11.5 L6 6.5 Z" fill="#6c6c78"/></svg>
<span class="t" style="left:216.08px;top:662.30px;font-size:18px;color:#202020;-webkit-text-stroke:0.3px #202020;transform:scaleX(0.9233);">IM-Importacao</span>
<div class="f" style="left:364px;top:656px;width:58px;height:32px"></div>
<span class="t" style="left:374.17px;top:662.30px;font-size:18px;color:#202020;-webkit-text-stroke:0.3px #202020;transform:scaleX(0.9180);">1512</span>
<div class="f" style="left:428px;top:656px;width:318px;height:32px"></div>
<div style="left:0;top:0;width:744px;height:1112px;overflow:hidden"><span class="t" style="left:432.90px;top:662.30px;font-size:18px;color:#a6a6a6;-webkit-text-stroke:0.12px #a6a6a6;transform:scaleX(0.9180);">COMPRA MATERIA PRIMA POR CONTA E ORDEM</span></div>
<div class="f" style="left:749px;top:656px;width:100.5px;height:32px"></div>
<span class="t" style="left:762.50px;top:662.30px;font-size:18px;color:#a6a6a6;-webkit-text-stroke:0.12px #a6a6a6;transform:scaleX(0.9180);">3,101,005</span>
<span class="t" style="left:950.80px;top:662.30px;font-size:18.5px;color:#1e1e1e;-webkit-text-stroke:0.3px #1e1e1e;transform:scaleX(0.8953);">Modal.</span>
<div class="f" style="left:1006px;top:656px;width:175px;height:32px"></div>
<div class="arr" style="left:1156px;top:658px;width:23px;height:28px"></div>
<svg style="position:absolute;left:1161.5px;top:668.5px" width="12" height="7"><path d="M0.5 0.5 H11.5 L6 6.5 Z" fill="#6c6c78"/></svg>
<span class="t" style="left:1013.00px;top:662.30px;font-size:18px;color:#202020;-webkit-text-stroke:0.3px #202020;transform:scaleX(0.9180);">2-Maritimo</span>
<span class="t" style="left:1218.34px;top:662.30px;font-size:18.5px;color:#1e1e1e;-webkit-text-stroke:0.3px #1e1e1e;transform:scaleX(0.9597);">Frete</span>
<div class="f" style="left:1267px;top:656px;width:120px;height:32px"></div>
<div class="arr" style="left:1362px;top:658px;width:23px;height:28px"></div>
<svg style="position:absolute;left:1367.5px;top:668.5px" width="12" height="7"><path d="M0.5 0.5 H11.5 L6 6.5 Z" fill="#6c6c78"/></svg>
<span class="t" style="left:1273.08px;top:662.30px;font-size:18px;color:#202020;-webkit-text-stroke:0.3px #202020;transform:scaleX(0.9180);">PREPAID</span>
<span class="t" style="left:158.47px;top:702.80px;font-size:18.5px;color:#1e1e1e;-webkit-text-stroke:0.3px #1e1e1e;transform:scaleX(0.9259);">Navio</span>
<div class="f" style="left:209px;top:696px;width:75.5px;height:33px"></div>
<span class="t" style="left:232.97px;top:702.80px;font-size:18px;color:#202020;-webkit-text-stroke:0.3px #202020;transform:scaleX(0.9180);">623</span>
<div class="f" style="left:291.5px;top:696px;width:382.5px;height:33px"></div>
<span class="t" style="left:295.40px;top:702.80px;font-size:18px;color:#a6a6a6;-webkit-text-stroke:0.12px #a6a6a6;transform:scaleX(0.9071);">A INFORMAR</span>
<span class="t" style="left:796.09px;top:702.80px;font-size:18.5px;color:#1e1e1e;-webkit-text-stroke:0.3px #1e1e1e;transform:scaleX(0.9099);">Porto Embarque</span>
<div class="f" style="left:926.5px;top:696px;width:74.0px;height:33px"></div>
<span class="t" style="left:949.72px;top:702.80px;font-size:18px;color:#202020;-webkit-text-stroke:0.3px #202020;transform:scaleX(0.9180);">206</span>
<div class="f" style="left:1005.5px;top:696px;width:382.5px;height:33px"></div>
<span class="t" style="left:1009.50px;top:702.80px;font-size:18px;color:#a6a6a6;-webkit-text-stroke:0.12px #a6a6a6;transform:scaleX(0.9071);">A INFORMAR</span>
<span class="t" style="left:98.68px;top:741.30px;font-size:18.5px;color:#1e1e1e;-webkit-text-stroke:0.3px #1e1e1e;transform:scaleX(0.9242);">Porto Destino</span>
<div class="f" style="left:209px;top:735px;width:75.5px;height:33px"></div>
<span class="t" style="left:241.70px;top:741.30px;font-size:18px;color:#202020;-webkit-text-stroke:0.3px #202020;transform:scaleX(0.9180);">1</span>
<div class="f" style="left:291.5px;top:735px;width:382.5px;height:33px"></div>
<span class="t" style="left:295.40px;top:741.30px;font-size:18px;color:#a6a6a6;-webkit-text-stroke:0.12px #a6a6a6;transform:scaleX(0.9180);">SANTOS</span>
<span class="t" style="left:745.06px;top:741.30px;font-size:18.5px;color:#1e1e1e;-webkit-text-stroke:0.3px #1e1e1e;transform:scaleX(0.9420);">Proformas</span>
<div class="f" style="left:833px;top:735px;width:260px;height:33px"></div>
<span class="t" style="left:837.50px;top:741.30px;font-size:18px;color:#202020;-webkit-text-stroke:0.3px #202020;transform:scaleX(0.9180);">001</span>
<span class="t" style="left:1170.08px;top:741.30px;font-size:18.5px;color:#1e1e1e;-webkit-text-stroke:0.3px #1e1e1e;transform:scaleX(0.9166);">Data Proforma</span>
<div class="f" style="left:1290px;top:735px;width:149px;height:33px"></div>
<span class="t" style="left:1320.60px;top:741.30px;font-size:18px;color:#202020;-webkit-text-stroke:0.3px #202020;transform:scaleX(0.9747);">27/11/2025</span>
<span class="t" style="left:1472.40px;top:741.30px;font-size:18.5px;color:#1e1e1e;-webkit-text-stroke:0.3px #1e1e1e;transform:scaleX(0.9288);">Situação</span>
<div class="f" style="left:1547px;top:735px;width:137px;height:33px"></div>
<div class="arr" style="left:1659px;top:737px;width:23px;height:29px"></div>
<svg style="position:absolute;left:1664.5px;top:748.0px" width="12" height="7"><path d="M0.5 0.5 H11.5 L6 6.5 Z" fill="#6c6c78"/></svg>
<span class="t" style="left:1553.08px;top:741.30px;font-size:18px;color:#202020;-webkit-text-stroke:0.3px #202020;transform:scaleX(0.9180);">1-Pendente</span>
<span class="t" style="left:76.70px;top:779.80px;font-size:18.5px;color:#1e1e1e;-webkit-text-stroke:0.3px #1e1e1e;transform:scaleX(0.9429);">Vlr.Frete Interno</span>
<div class="f" style="left:209px;top:773px;width:145.5px;height:33.5px"></div>
<span class="t" style="left:438.70px;top:779.80px;font-size:18.5px;color:#1e1e1e;-webkit-text-stroke:0.3px #1e1e1e;transform:scaleX(0.9052);">Vlr Embalagem</span>
<div class="f" style="left:560.5px;top:773px;width:135.5px;height:33.5px"></div>
<span class="t" style="left:726.70px;top:779.80px;font-size:18.5px;color:#1e1e1e;-webkit-text-stroke:0.3px #1e1e1e;transform:scaleX(0.9636);">Valor Outros</span>
<div class="f" style="left:833px;top:773px;width:144.5px;height:33.5px"></div>
<span class="t" style="left:1016.07px;top:779.80px;font-size:18.5px;color:#1e1e1e;-webkit-text-stroke:0.3px #1e1e1e;transform:scaleX(0.9332);">Procedencia</span>
<div class="f" style="left:1120.5px;top:773px;width:266.5px;height:33.5px"></div>
<span class="t" style="left:1125.00px;top:779.80px;font-size:18px;color:#202020;-webkit-text-stroke:0.3px #202020;transform:scaleX(0.9180);">CHINA</span>
<span class="t" style="left:113.00px;top:821.30px;font-size:18.5px;color:#1e1e1e;-webkit-text-stroke:0.3px #1e1e1e;transform:scaleX(0.9086);">Obs-Pedido</span>
<div class="f" style="left:209px;top:814.5px;width:61.5px;height:32.0px"></div>
<span class="t" style="left:225.97px;top:821.30px;font-size:18px;color:#202020;-webkit-text-stroke:0.3px #202020;transform:scaleX(0.9180);">800</span>
<div class="f" style="left:277px;top:814.5px;width:58px;height:32.0px"></div>
<div style="left:0;top:0;width:331px;height:1112px;overflow:hidden"><span class="t" style="left:280.08px;top:821.30px;font-size:18px;color:#202020;-webkit-text-stroke:0.3px #202020;transform:scaleX(0.9180);">DOCUMENTOS</span></div>
<div class="btn" style="left:343px;top:816px;width:44.5px;height:29.5px"></div>
<span class="t" style="left:350.20px;top:821.30px;font-size:18px;color:#202020;-webkit-text-stroke:0.3px #202020;transform:scaleX(0.9320);">O...</span>
<span class="t" style="left:520.28px;top:821.30px;font-size:18.5px;color:#1e1e1e;-webkit-text-stroke:0.3px #1e1e1e;transform:scaleX(0.9237);">Licenciamento</span>
<div class="f" style="left:639px;top:814.5px;width:60px;height:32.0px"></div>
<div class="f" style="left:701.5px;top:814.5px;width:114.0px;height:32.0px"></div>
<div class="btn" style="left:822px;top:816px;width:45.5px;height:29.5px"></div>
<span class="t" style="left:829.79px;top:821.30px;font-size:18px;color:#202020;-webkit-text-stroke:0.3px #202020;transform:scaleX(1.0112);">Lic.</span>
<span class="t" style="left:952.07px;top:821.30px;font-size:18.5px;color:#1e1e1e;-webkit-text-stroke:0.3px #1e1e1e;transform:scaleX(0.9336);">Mercadoria Generica</span>
<div class="f" style="left:1122px;top:814.5px;width:265.5px;height:32.0px"></div>
<span class="t" style="left:998.08px;top:857.00px;font-size:18.5px;color:#1e1e1e;-webkit-text-stroke:0.3px #1e1e1e;transform:scaleX(0.9185);">Info. Embarque</span>
<div class="f" style="left:1122.5px;top:850px;width:561.0px;height:34px"></div>
<div class="f" style="left:1122.5px;top:887px;width:177.0px;height:32px"></div>
<div class="f" style="left:1305.5px;top:887px;width:206.5px;height:32px"></div>
<div style="left:500px;top:938px;width:427px;height:76px;border:2px solid #e2eaf3"></div>
<div style="left:600px;top:956px;width:239px;height:41px;border:2px solid #5d74a0;border-radius:3px"></div>
<div style="left:608px;top:961px;width:222px;height:2px;border-top:2px dotted #222"></div>
<div style="left:608px;top:988px;width:222px;height:2px;border-top:2px dotted #222"></div>
<span class="t" style="left:646.00px;top:967.40px;font-size:18.5px;color:#1e1e1e;-webkit-text-stroke:0.3px #1e1e1e;transform:scaleX(0.9143);">Ordens De Compra</span>
<div class="tab" style="left:4px;width:137px;background:#94b7da;border:1px solid #7f9fc4;border-top:none"></div>
<span class="t" style="left:46.84px;top:1078.20px;font-size:17.5px;color:#151515;-webkit-text-stroke:0.25px #151515;transform:scaleX(0.9610);">Pedido</span>
<div class="tab" style="left:146px;width:133px"></div>
<span class="t" style="left:173.53px;top:1078.20px;font-size:17.5px;color:#404040;-webkit-text-stroke:0.15px #404040;transform:scaleX(0.9733);">Embarque</span>
<div class="tab" style="left:284px;width:133px"></div>
<span class="t" style="left:339.40px;top:1078.20px;font-size:17.5px;color:#404040;-webkit-text-stroke:0.15px #404040;transform:scaleX(0.8950);">D.I.</span>
<div class="tab" style="left:423px;width:133px"></div>
<span class="t" style="left:462.30px;top:1078.20px;font-size:17.5px;color:#404040;-webkit-text-stroke:0.15px #404040;transform:scaleX(0.9468);">Cambio</span>
<div class="tab" style="left:561px;width:133px"></div>
<span class="t" style="left:589.63px;top:1078.20px;font-size:17.5px;color:#404040;-webkit-text-stroke:0.15px #404040;transform:scaleX(0.9701);">Romaneio</span>
<div class="tab" style="left:699px;width:133px"></div>
<span class="t" style="left:726.18px;top:1078.20px;font-size:17.5px;color:#404040;-webkit-text-stroke:0.15px #404040;transform:scaleX(1.0199);">Despesas</span>
<div class="tab" style="left:838px;width:133px"></div>
<span class="t" style="left:846.41px;top:1078.20px;font-size:17.5px;color:#404040;-webkit-text-stroke:0.15px #404040;transform:scaleX(0.9938);">Despesas DTL</span>
<div class="tab" style="left:976px;width:133px"></div>
<span class="t" style="left:1012.64px;top:1078.20px;font-size:17.5px;color:#404040;-webkit-text-stroke:0.15px #404040;transform:scaleX(0.9562);">Maquila</span>
<div class="tab" style="left:1114px;width:133px"></div>
<span class="t" style="left:1126.50px;top:1078.20px;font-size:17.5px;color:#404040;-webkit-text-stroke:0.15px #404040;transform:scaleX(0.9832);">Cotacao Frete</span>
<div class="tab" style="left:1252px;width:133px"></div>
<span class="t" style="left:1308.00px;top:1078.20px;font-size:17.5px;color:#404040;-webkit-text-stroke:0.15px #404040;transform:scaleX(0.9862);">Oc</span>
<div class="tab" style="left:1391px;width:133px"></div>
<span class="t" style="left:1418.90px;top:1078.20px;font-size:17.5px;color:#404040;-webkit-text-stroke:0.15px #404040;transform:scaleX(0.9722);">Consultas</span>
</body></html>
